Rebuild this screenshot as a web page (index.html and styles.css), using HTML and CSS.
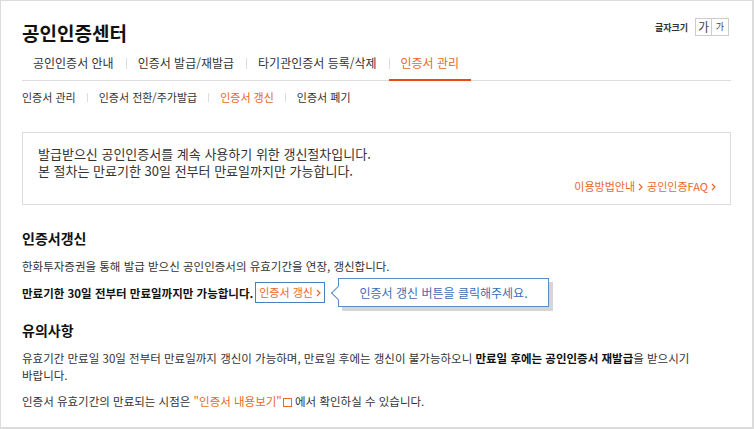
FILE: index.html
```html
<!DOCTYPE html>
<html lang="ko">
<head>
    <meta charset="UTF-8">
    <meta name="viewport" content="width=device-width, initial-scale=1.0">
    <title>공인인증센터</title>
    <link rel="stylesheet" href="styles.css">
</head>
<body>
<div class="page">
    <div class="header">
        <h1>공인인증센터</h1>
        <div class="fontsize">
            <span class="fontsize-label">글자크기</span>
            <button class="fs-btn big">가</button><button class="fs-btn small">가</button>
        </div>
    </div>

    <ul class="tabs">
        <li>공인인증서 안내</li>
        <li>인증서 발급/재발급</li>
        <li>타기관인증서 등록/삭제</li>
        <li class="on">인증서 관리</li>
    </ul>

    <ul class="subnav">
        <li>인증서 관리</li>
        <li>인증서 전환/주가발급</li>
        <li class="on">인증서 갱신</li>
        <li>인증서 폐기</li>
    </ul>

    <div class="infobox">
        <p>발급받으신 공인인증서를 계속 사용하기 위한 갱신절차입니다.<br>
        본 절차는 만료기한 30일 전부터 만료일까지만 가능합니다.</p>
        <div class="links">
            <a href="#">이용방법안내 <svg class="chev" width="5" height="8" viewBox="0 0 5 8"><polyline points="1,1 4,4 1,7" /></svg></a>
            <a href="#">공인인증FAQ <svg class="chev" width="5" height="8" viewBox="0 0 5 8"><polyline points="1,1 4,4 1,7" /></svg></a>
        </div>
    </div>

    <h2>인증서갱신</h2>
    <p class="text">한화투자증권을 통해 발급 받으신 공인인증서의 유효기간을 연장, 갱신합니다.</p>
    <div class="renew-row">
        <strong>만료기한 30일 전부터 만료일까지만 가능합니다.</strong>
        <a href="#" class="renew-btn">인증서 갱신 <svg class="chev" width="5" height="8" viewBox="0 0 5 8"><polyline points="1,1 4,4 1,7" /></svg></a>
        <div class="tip">인증서 갱신 버튼을 클릭해주세요.</div>
    </div>

    <h2 class="notice-title">유의사항</h2>
    <p class="text">유효기간 만료일 30일 전부터 만료일까지 갱신이 가능하며, 만료일 후에는 갱신이 불가능하오니 <strong>만료일 후에는 공인인증서 재발급</strong>을 받으시기 바랍니다.</p>
    <p class="text last">인증서 유효기간의 만료되는 시점은 <span class="orange">"인증서 내용보기"<i class="popup-icon"></i></span> 에서 확인하실 수 있습니다.</p>
</div>
</body>
</html>
```

FILE: styles.css
```css
body {
    margin: 0;
    font-family: "Noto Sans CJK KR", "Noto Sans", sans-serif;
    color: #222;
    background: #fff;
}
.page {
    box-sizing: border-box;
    width: 754px;
    height: 429px;
    border: 1px solid #dcdcdc;
    border-right-width: 2px;
    border-bottom-width: 2px;
    padding: 20px 21px 0 21px;
}
.header {
    display: flex;
    justify-content: space-between;
    align-items: flex-start;
}
h1 {
    margin: 0;
    font-size: 19px;
    line-height: 24px;
    font-weight: bold;
    color: #111;
}
.fontsize {
    display: flex;
    align-items: center;
    margin-top: -3px;
    margin-right: 2px;
}
.fontsize-label {
    font-size: 9px;
    font-weight: bold;
    color: #333;
    margin-right: 7px;
}
.fs-btn {
    width: 17px;
    height: 18px;
    padding: 0;
    border: 1px solid #ccc;
    background: #fff;
    color: #444;
    font-family: inherit;
    line-height: 14px;
}
.fs-btn.big {
    font-size: 12px;
}
.fs-btn.small {
    font-size: 9px;
    border-left: none;
}
.tabs {
    display: flex;
    list-style: none;
    margin: 0;
    padding: 0;
    border-bottom: 1px solid #ddd;
}
.tabs li {
    position: relative;
    padding: 10px 12px 9px;
    font-size: 12px;
    line-height: 16px;
    color: #333;
}
.tabs li:first-child {
    padding-left: 11px;
}
.tabs li + li::before {
    content: "";
    position: absolute;
    left: 0;
    top: 13px;
    height: 11px;
    border-left: 1px solid #ddd;
}
.tabs li.on {
    color: #e8672a;
    border-bottom: 2px solid #e8490f;
    padding-bottom: 8px;
    margin-bottom: -1px;
}
.subnav {
    display: flex;
    list-style: none;
    margin: 9px 0 0;
    padding: 0;
}
.subnav li {
    position: relative;
    padding: 0 11px 0 12px;
    font-size: 11px;
    line-height: 14px;
    color: #333;
}
.subnav li:first-child {
    padding-left: 0;
}
.subnav li + li::before {
    content: "";
    position: absolute;
    left: 0;
    top: 3px;
    height: 9px;
    border-left: 1px solid #ddd;
}
.subnav li.on {
    color: #e8672a;
}
.infobox {
    margin-top: 28px;
    border: 1px solid #ddd;
    padding: 12px 14px 11px 15px;
}
.infobox p {
    margin: 0;
    font-size: 13px;
    line-height: 17px;
    color: #333;
}
.links {
    display: flex;
    justify-content: flex-end;
    gap: 4px;
    font-size: 11px;
    line-height: 14px;
}
a {
    color: #e8672a;
    text-decoration: none;
}
.chev {
    fill: none;
    stroke: currentColor;
    stroke-width: 1.2;
    vertical-align: 0;
}
h2 {
    margin: 23px 0 0;
    font-size: 14px;
    line-height: 20px;
    font-weight: bold;
    color: #111;
}
.text {
    margin: 10px 0 0;
    font-size: 11.5px;
    line-height: 17px;
    color: #333;
    word-break: keep-all;
}
.text strong, .renew-row strong {
    color: #111;
}
.renew-row {
    display: flex;
    align-items: center;
    margin-top: 3px;
    font-size: 11.5px;
}
.renew-btn {
    margin-left: 2px;
    padding: 0 3px;
    height: 19px;
    line-height: 19px;
    font-size: 11px;
    border: 1px solid #4a7fc1;
}
.tip {
    position: relative;
    margin-left: 13px;
    width: 209px;
    height: 27px;
    line-height: 27px;
    border: 1px solid #5a8bc9;
    background: #fff;
    box-shadow: 4px 4px 0 #d6d6d6;
    color: #3c6db5;
    font-size: 12px;
    text-align: center;
}
.tip::before {
    content: "";
    position: absolute;
    left: -6px;
    top: 9px;
    width: 9px;
    height: 9px;
    background: #fff;
    border-left: 1px solid #5a8bc9;
    border-bottom: 1px solid #5a8bc9;
    transform: rotate(45deg);
}
.notice-title {
    margin-top: 13px;
}
.text.last {
    margin-top: 9px;
}
.orange {
    color: #e8672a;
}
.popup-icon {
    display: inline-block;
    width: 7px;
    height: 7px;
    margin-left: 1px;
    border: 1px solid #e8672a;
    vertical-align: -1px;
}
```
